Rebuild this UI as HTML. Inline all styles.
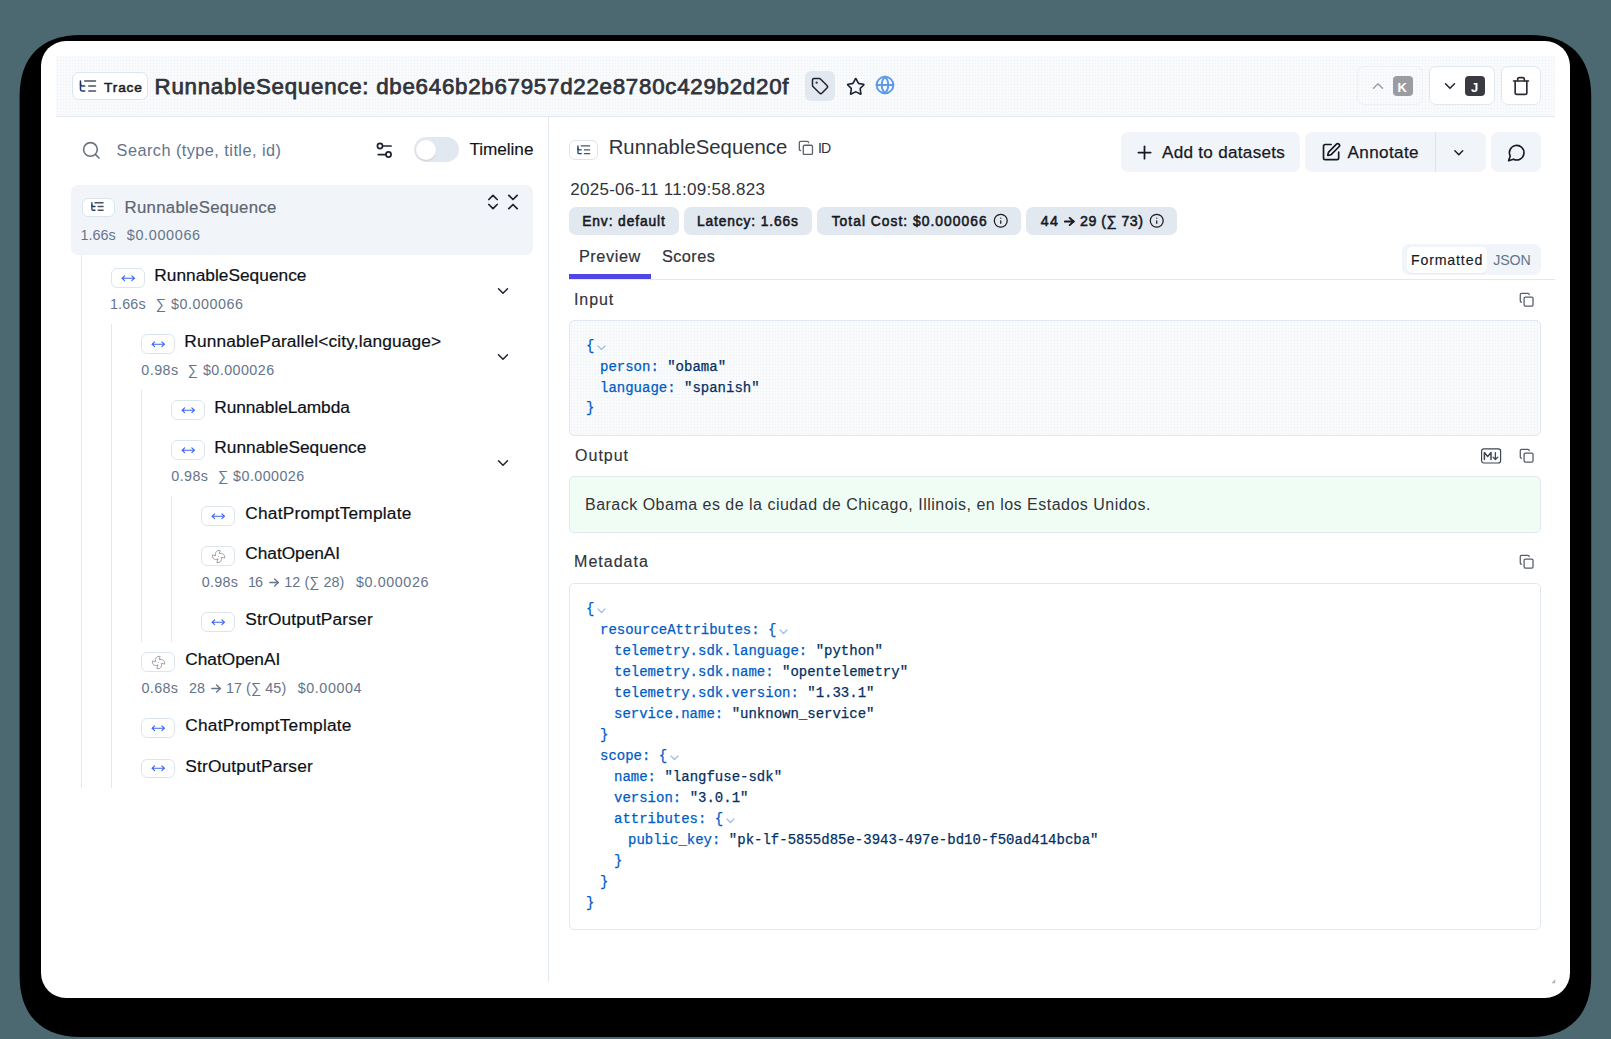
<!DOCTYPE html>
<html><head><meta charset="utf-8"><style>
html,body{margin:0;padding:0;}
body{width:1611px;height:1039px;position:relative;overflow:hidden;background:#4c6870;font-family:'Liberation Sans', sans-serif;}
</style></head><body>
<svg style="position:absolute;left:0;top:0" width="1611" height="1039"><path d="M80.6,35 L1530.2,35 C1569.24,35 1591.2,56.96 1591.2,96 L1591.2,976 C1591.2,1015.04 1569.24,1037 1530.2,1037 L80.6,1037 C41.56,1037 19.6,1015.04 19.6,976 L19.6,96 C19.6,56.96 41.56,35 80.6,35 Z" fill="#000"/></svg>
<div style="position:absolute;left:41px;top:41px;width:1529px;height:957px;background:#fff;border-radius:25px;"></div>
<div style="position:absolute;left:56px;top:56px;width:1499px;height:61px;background:#f8fafc;border-radius:0px;border-bottom:1px solid #e2e8f0;box-sizing:border-box;background-image:radial-gradient(circle at 1.5px 1.5px, #eceff4 0.6px, transparent 1px);background-size:3px 3px;"></div>
<div style="position:absolute;left:72px;top:72px;width:76px;height:28px;background:#fff;border-radius:0px;border:1.5px solid #dde5ef;box-sizing:border-box;border-radius:7px;"></div>
<svg style="position:absolute;left:78.0px;top:75.9px;" width="20" height="20" viewBox="0 0 24 24" fill="none" stroke="#1d3a6b" stroke-width="1.9" stroke-linecap="round" stroke-linejoin="round"><path d="M21 12h-8" stroke="#4a5261"/><path d="M21 6H8" stroke="#4a5261"/><path d="M21 18h-8" stroke="#4a5261"/><path d="M3 6v4c0 1.1.9 2 2 2h3"/><path d="M3 10v6c0 1.1.9 2 2 2h3"/></svg>
<div id="t1" style="position:absolute;left:104.00px;top:80.71px;font-family:'Liberation Sans', sans-serif;font-size:13.7px;line-height:1;font-weight:400;color:#1a1f2b;white-space:pre;letter-spacing:0.858px;-webkit-text-stroke:0.55px #1a1f2b;">Trace</div>
<div id="t2" style="position:absolute;left:154.60px;top:75.80px;font-family:'Liberation Sans', sans-serif;font-size:22.3px;line-height:1;font-weight:400;color:#30333b;white-space:pre;letter-spacing:0.740px;-webkit-text-stroke:0.75px #30333b;">RunnableSequence: dbe646b2b67957d22e8780c429b2d20f</div>
<div style="position:absolute;left:805px;top:71px;width:30px;height:30px;background:#e2e8f0;border-radius:6px;"></div>
<svg style="position:absolute;left:811.0px;top:77.0px;" width="18" height="18" viewBox="0 0 24 24" fill="none" stroke="#1f2330" stroke-width="2" stroke-linecap="round" stroke-linejoin="round"><path d="M12.586 2.586A2 2 0 0 0 11.172 2H4a2 2 0 0 0-2 2v7.172a2 2 0 0 0 .586 1.414l8.704 8.704a2.426 2.426 0 0 0 3.42 0l6.58-6.58a2.426 2.426 0 0 0 0-3.42z"/><circle cx="7.5" cy="7.5" r=".5" fill="currentColor"/></svg>
<svg style="position:absolute;left:845.65px;top:77.05px;" width="19.5" height="19.5" viewBox="0 0 24 24" fill="none" stroke="#1f2330" stroke-width="2" stroke-linecap="round" stroke-linejoin="round"><path d="M11.525 2.295a.53.53 0 0 1 .95 0l2.31 4.679a2.123 2.123 0 0 0 1.595 1.16l5.166.756a.53.53 0 0 1 .294.904l-3.736 3.638a2.123 2.123 0 0 0-.611 1.878l.882 5.14a.53.53 0 0 1-.771.56l-4.618-2.428a2.122 2.122 0 0 0-1.973 0L6.396 21.01a.53.53 0 0 1-.77-.56l.881-5.139a2.122 2.122 0 0 0-.611-1.879L2.16 9.795a.53.53 0 0 1 .294-.906l5.165-.755a2.122 2.122 0 0 0 1.597-1.16z"/></svg>
<svg style="position:absolute;left:875.1px;top:75.0px;" width="20" height="20" viewBox="0 0 24 24" fill="none" stroke="#5d9be8" stroke-width="2.3" stroke-linecap="round" stroke-linejoin="round"><circle cx="12" cy="12" r="10"/><path d="M12 2a14.5 14.5 0 0 0 0 20 14.5 14.5 0 0 0 0-20"/><path d="M2 12h20"/></svg>
<div style="position:absolute;left:1357px;top:66px;width:66px;height:39px;background:transparent;border:1px solid #edf1f5;box-sizing:border-box;border-radius:7px;"></div>
<svg style="position:absolute;left:1369.0px;top:77.0px;" width="18" height="18" viewBox="0 0 24 24" fill="none" stroke="#9aa0a8" stroke-width="2" stroke-linecap="round" stroke-linejoin="round"><path d="m18 15-6-6-6 6"/></svg>
<div style="position:absolute;left:1393px;top:76px;width:20px;height:20px;background:#9a9ca2;border-radius:4px;"></div>
<div id="t3" style="position:absolute;left:1397.50px;top:81.01px;font-family:'Liberation Sans', sans-serif;font-size:13px;line-height:1;font-weight:700;color:#fff;white-space:pre;">K</div>
<div style="position:absolute;left:1429px;top:66px;width:66px;height:39px;background:#fff;border:1px solid #e2e8f0;box-sizing:border-box;border-radius:7px;"></div>
<svg style="position:absolute;left:1441.0px;top:77.0px;" width="18" height="18" viewBox="0 0 24 24" fill="none" stroke="#1f2330" stroke-width="2" stroke-linecap="round" stroke-linejoin="round"><path d="m6 9 6 6 6-6"/></svg>
<div style="position:absolute;left:1465px;top:76px;width:20px;height:20px;background:#3a3b41;border-radius:4px;"></div>
<div id="t4" style="position:absolute;left:1471.00px;top:81.01px;font-family:'Liberation Sans', sans-serif;font-size:13px;line-height:1;font-weight:700;color:#fff;white-space:pre;">J</div>
<div style="position:absolute;left:1501px;top:66px;width:40px;height:39px;background:#fff;border:1px solid #e2e8f0;box-sizing:border-box;border-radius:7px;"></div>
<svg style="position:absolute;left:1511.1px;top:75.8px;" width="20" height="20" viewBox="0 0 24 24" fill="none" stroke="#2a2d35" stroke-width="2" stroke-linecap="round" stroke-linejoin="round"><path d="M3 6h18"/><path d="M19 6v14c0 1-1 2-2 2H7c-1 0-2-1-2-2V6"/><path d="M8 6V4c0-1 1-2 2-2h4c1 0 2 1 2 2v2"/></svg>
<div style="position:absolute;left:548px;top:117px;width:1px;height:865px;background:#e2e8f0;border-radius:0px;"></div>
<svg style="position:absolute;left:80.6px;top:139.7px;" width="20.6" height="20.6" viewBox="0 0 24 24" fill="none" stroke="#6b7280" stroke-width="1.9" stroke-linecap="round" stroke-linejoin="round"><circle cx="11" cy="11" r="8"/><path d="m21 21-4.3-4.3"/></svg>
<div id="t5" style="position:absolute;left:116.60px;top:142.00px;font-family:'Liberation Sans', sans-serif;font-size:16.3px;line-height:1;font-weight:400;color:#64748b;white-space:pre;letter-spacing:0.456px;">Search (type, title, id)</div>
<svg style="position:absolute;left:373.85px;top:139.55px;" width="20.5" height="20.5" viewBox="0 0 24 24" fill="none" stroke="#1f2330" stroke-width="2" stroke-linecap="round" stroke-linejoin="round"><path d="M20 7h-9"/><path d="M14 17H5"/><circle cx="17" cy="17" r="3"/><circle cx="7" cy="7" r="3"/></svg>
<div style="position:absolute;left:414px;top:137px;width:45px;height:25px;background:#e2e8f0;border-radius:13px;"></div>
<div style="position:absolute;left:416px;top:140.2px;width:20px;height:20px;background:#fff;border-radius:10px;box-shadow:0 1px 1.5px rgba(0,0,0,.12);"></div>
<div id="t6" style="position:absolute;left:469.40px;top:140.91px;font-family:'Liberation Sans', sans-serif;font-size:17.2px;line-height:1;font-weight:400;color:#111318;white-space:pre;letter-spacing:-0.036px;-webkit-text-stroke:0.15px #111318;">Timeline</div>
<div style="position:absolute;left:71px;top:185px;width:462px;height:70px;background:#f1f5f9;border-radius:7px;"></div>
<div style="position:absolute;left:81.5px;top:197.5px;width:33px;height:19px;background:#fff;border-radius:0px;border:1.5px solid #dce4ee;box-sizing:border-box;border-radius:6px;"></div>
<svg style="position:absolute;left:90.4px;top:199.4px;" width="15" height="15" viewBox="0 0 24 24" fill="none" stroke="#1d3a6b" stroke-width="2.1" stroke-linecap="round" stroke-linejoin="round"><path d="M21 12h-8" stroke="#4a5261"/><path d="M21 6H8" stroke="#4a5261"/><path d="M21 18h-8" stroke="#4a5261"/><path d="M3 6v4c0 1.1.9 2 2 2h3"/><path d="M3 10v6c0 1.1.9 2 2 2h3"/></svg>
<div id="t7" style="position:absolute;left:124.60px;top:199.90px;font-family:'Liberation Sans', sans-serif;font-size:16.8px;line-height:1;font-weight:400;color:#5e6570;white-space:pre;letter-spacing:0.287px;-webkit-text-stroke:0.2px #5e6570;">RunnableSequence</div>
<div id="t8" style="position:absolute;left:80.60px;top:228.01px;font-family:'Liberation Sans', sans-serif;font-size:14.4px;line-height:1;font-weight:400;color:#64748b;white-space:pre;letter-spacing:-0.052px;">1.66s</div>
<div id="t9" style="position:absolute;left:126.80px;top:228.01px;font-family:'Liberation Sans', sans-serif;font-size:14.4px;line-height:1;font-weight:400;color:#64748b;white-space:pre;letter-spacing:0.660px;">$0.000066</div>
<svg style="position:absolute;left:483.0px;top:192.0px;" width="20" height="20" viewBox="0 0 24 24" fill="none" stroke="#1f2330" stroke-width="2.1" stroke-linecap="round" stroke-linejoin="round"><path d="m7 15 5 5 5-5"/><path d="m7 9 5-5 5 5"/></svg>
<svg style="position:absolute;left:503.0px;top:192.0px;" width="20" height="20" viewBox="0 0 24 24" fill="none" stroke="#1f2330" stroke-width="2.1" stroke-linecap="round" stroke-linejoin="round"><path d="m7 20 5-5 5 5"/><path d="m7 4 5 5 5-5"/></svg>
<div style="position:absolute;left:81px;top:255px;width:1px;height:533px;background:#e2e8f0;border-radius:0px;"></div>
<div style="position:absolute;left:111px;top:324px;width:1px;height:464px;background:#e2e8f0;border-radius:0px;"></div>
<div style="position:absolute;left:141px;top:390px;width:1px;height:252px;background:#e2e8f0;border-radius:0px;"></div>
<div style="position:absolute;left:171px;top:496px;width:1px;height:146px;background:#e2e8f0;border-radius:0px;"></div>
<div style="position:absolute;left:111px;top:268px;width:33.5px;height:19.5px;background:#fff;border-radius:0px;border:1.5px solid #dce4ee;box-sizing:border-box;border-radius:6px;"></div>
<svg style="position:absolute;left:121.05px;top:270.55px;" width="14.5" height="14.5" viewBox="0 0 24 24" fill="none" stroke="#3b63f0" stroke-width="1.8" stroke-linecap="round" stroke-linejoin="round"><polyline points="18 8 22 12 18 16"/><polyline points="6 8 2 12 6 16"/><line x1="2" x2="22" y1="12" y2="12"/></svg>
<div id="t10" style="position:absolute;left:154.30px;top:267.00px;font-family:'Liberation Sans', sans-serif;font-size:17.3px;line-height:1;font-weight:400;color:#0d1117;white-space:pre;letter-spacing:0.020px;-webkit-text-stroke:0.2px #0d1117;">RunnableSequence</div>
<div id="t11" style="position:absolute;left:110.00px;top:297.00px;font-family:'Liberation Sans', sans-serif;font-size:14.3px;line-height:1;font-weight:400;color:#64748b;white-space:pre;letter-spacing:0.144px;">1.66s</div>
<div id="t12" style="position:absolute;left:155.80px;top:297.00px;font-family:'Liberation Sans', sans-serif;font-size:14.3px;line-height:1;font-weight:400;color:#64748b;white-space:pre;letter-spacing:0.550px;">∑ $0.000066</div>
<svg style="position:absolute;left:494.0px;top:281.5px;" width="18" height="18" viewBox="0 0 24 24" fill="none" stroke="#1f2330" stroke-width="2" stroke-linecap="round" stroke-linejoin="round"><path d="m6 9 6 6 6-6"/></svg>
<div style="position:absolute;left:141px;top:334px;width:33.5px;height:19.5px;background:#fff;border-radius:0px;border:1.5px solid #dce4ee;box-sizing:border-box;border-radius:6px;"></div>
<svg style="position:absolute;left:151.05px;top:336.55px;" width="14.5" height="14.5" viewBox="0 0 24 24" fill="none" stroke="#3b63f0" stroke-width="1.8" stroke-linecap="round" stroke-linejoin="round"><polyline points="18 8 22 12 18 16"/><polyline points="6 8 2 12 6 16"/><line x1="2" x2="22" y1="12" y2="12"/></svg>
<div id="t13" style="position:absolute;left:184.30px;top:333.00px;font-family:'Liberation Sans', sans-serif;font-size:17.3px;line-height:1;font-weight:400;color:#0d1117;white-space:pre;letter-spacing:0.151px;-webkit-text-stroke:0.2px #0d1117;">RunnableParallel&lt;city,language&gt;</div>
<div id="t14" style="position:absolute;left:141.30px;top:363.00px;font-family:'Liberation Sans', sans-serif;font-size:14.3px;line-height:1;font-weight:400;color:#64748b;white-space:pre;letter-spacing:0.469px;">0.98s</div>
<div id="t15" style="position:absolute;left:187.80px;top:363.00px;font-family:'Liberation Sans', sans-serif;font-size:14.3px;line-height:1;font-weight:400;color:#64748b;white-space:pre;letter-spacing:0.460px;">∑ $0.000026</div>
<svg style="position:absolute;left:494.0px;top:347.5px;" width="18" height="18" viewBox="0 0 24 24" fill="none" stroke="#1f2330" stroke-width="2" stroke-linecap="round" stroke-linejoin="round"><path d="m6 9 6 6 6-6"/></svg>
<div style="position:absolute;left:171px;top:400px;width:33.5px;height:19.5px;background:#fff;border-radius:0px;border:1.5px solid #dce4ee;box-sizing:border-box;border-radius:6px;"></div>
<svg style="position:absolute;left:181.05px;top:402.55px;" width="14.5" height="14.5" viewBox="0 0 24 24" fill="none" stroke="#3b63f0" stroke-width="1.8" stroke-linecap="round" stroke-linejoin="round"><polyline points="18 8 22 12 18 16"/><polyline points="6 8 2 12 6 16"/><line x1="2" x2="22" y1="12" y2="12"/></svg>
<div id="t16" style="position:absolute;left:214.30px;top:399.00px;font-family:'Liberation Sans', sans-serif;font-size:17.3px;line-height:1;font-weight:400;color:#0d1117;white-space:pre;letter-spacing:-0.071px;-webkit-text-stroke:0.2px #0d1117;">RunnableLambda</div>
<div style="position:absolute;left:171px;top:440.3px;width:33.5px;height:19.5px;background:#fff;border-radius:0px;border:1.5px solid #dce4ee;box-sizing:border-box;border-radius:6px;"></div>
<svg style="position:absolute;left:181.05px;top:442.85px;" width="14.5" height="14.5" viewBox="0 0 24 24" fill="none" stroke="#3b63f0" stroke-width="1.8" stroke-linecap="round" stroke-linejoin="round"><polyline points="18 8 22 12 18 16"/><polyline points="6 8 2 12 6 16"/><line x1="2" x2="22" y1="12" y2="12"/></svg>
<div id="t17" style="position:absolute;left:214.30px;top:439.30px;font-family:'Liberation Sans', sans-serif;font-size:17.3px;line-height:1;font-weight:400;color:#0d1117;white-space:pre;letter-spacing:0.013px;-webkit-text-stroke:0.2px #0d1117;">RunnableSequence</div>
<div id="t18" style="position:absolute;left:171.30px;top:469.31px;font-family:'Liberation Sans', sans-serif;font-size:14.3px;line-height:1;font-weight:400;color:#64748b;white-space:pre;letter-spacing:0.419px;">0.98s</div>
<div id="t19" style="position:absolute;left:218.10px;top:469.31px;font-family:'Liberation Sans', sans-serif;font-size:14.3px;line-height:1;font-weight:400;color:#64748b;white-space:pre;letter-spacing:0.430px;">∑ $0.000026</div>
<svg style="position:absolute;left:494.0px;top:453.8px;" width="18" height="18" viewBox="0 0 24 24" fill="none" stroke="#1f2330" stroke-width="2" stroke-linecap="round" stroke-linejoin="round"><path d="m6 9 6 6 6-6"/></svg>
<div style="position:absolute;left:201px;top:506.29999999999995px;width:33.5px;height:19.5px;background:#fff;border-radius:0px;border:1.5px solid #dce4ee;box-sizing:border-box;border-radius:6px;"></div>
<svg style="position:absolute;left:211.05px;top:508.85px;" width="14.5" height="14.5" viewBox="0 0 24 24" fill="none" stroke="#3b63f0" stroke-width="1.8" stroke-linecap="round" stroke-linejoin="round"><polyline points="18 8 22 12 18 16"/><polyline points="6 8 2 12 6 16"/><line x1="2" x2="22" y1="12" y2="12"/></svg>
<div id="t20" style="position:absolute;left:245.30px;top:505.30px;font-family:'Liberation Sans', sans-serif;font-size:17.3px;line-height:1;font-weight:400;color:#0d1117;white-space:pre;letter-spacing:0.217px;-webkit-text-stroke:0.2px #0d1117;">ChatPromptTemplate</div>
<div style="position:absolute;left:201px;top:546px;width:33.5px;height:19.5px;background:#fff;border-radius:0px;border:1.5px solid #dce4ee;box-sizing:border-box;border-radius:6px;"></div>
<svg style="position:absolute;left:210.8px;top:548.5px;" width="15" height="15" viewBox="0 0 24 24" fill="none" stroke="#a0a4ab" stroke-width="1.6" stroke-linecap="round" stroke-linejoin="round"><path d="M10.827 16.379a6.082 6.082 0 0 1-8.618-7.002l5.412 1.45a6.082 6.082 0 0 1 7.002-8.618l-1.45 5.412a6.082 6.082 0 0 1 8.618 7.002l-5.412-1.45a6.082 6.082 0 0 1-7.002 8.618l1.45-5.412Z"/><path d="M12 12v.01"/></svg>
<div id="t21" style="position:absolute;left:245.30px;top:545.01px;font-family:'Liberation Sans', sans-serif;font-size:17.3px;line-height:1;font-weight:400;color:#0d1117;white-space:pre;letter-spacing:-0.034px;-webkit-text-stroke:0.2px #0d1117;">ChatOpenAI</div>
<div id="t22" style="position:absolute;left:201.70px;top:575.00px;font-family:'Liberation Sans', sans-serif;font-size:14.3px;line-height:1;font-weight:400;color:#64748b;white-space:pre;letter-spacing:0.294px;">0.98s</div>
<div id="t23" style="position:absolute;left:248.10px;top:575.00px;font-family:'Liberation Sans', sans-serif;font-size:14.3px;line-height:1;font-weight:400;color:#64748b;white-space:pre;letter-spacing:-0.951px;">16</div>
<svg style="position:absolute;left:269.2px;top:577.5px;" width="10.5" height="9" viewBox="0 0 10.5 9" fill="none" stroke="#64748b" stroke-width="1.35" stroke-linecap="round" stroke-linejoin="round"><path d="M0.8 4.5h8.5"/><path d="M5.6 0.9l3.7 3.6-3.7 3.6"/></svg>
<div id="t24" style="position:absolute;left:284.30px;top:575.00px;font-family:'Liberation Sans', sans-serif;font-size:14.3px;line-height:1;font-weight:400;color:#64748b;white-space:pre;letter-spacing:0.075px;">12 (∑ 28)</div>
<div id="t25" style="position:absolute;left:355.90px;top:575.00px;font-family:'Liberation Sans', sans-serif;font-size:14.3px;line-height:1;font-weight:400;color:#64748b;white-space:pre;letter-spacing:0.621px;">$0.000026</div>
<div style="position:absolute;left:201px;top:612.3px;width:33.5px;height:19.5px;background:#fff;border-radius:0px;border:1.5px solid #dce4ee;box-sizing:border-box;border-radius:6px;"></div>
<svg style="position:absolute;left:211.05px;top:614.85px;" width="14.5" height="14.5" viewBox="0 0 24 24" fill="none" stroke="#3b63f0" stroke-width="1.8" stroke-linecap="round" stroke-linejoin="round"><polyline points="18 8 22 12 18 16"/><polyline points="6 8 2 12 6 16"/><line x1="2" x2="22" y1="12" y2="12"/></svg>
<div id="t26" style="position:absolute;left:245.30px;top:611.30px;font-family:'Liberation Sans', sans-serif;font-size:17.3px;line-height:1;font-weight:400;color:#0d1117;white-space:pre;letter-spacing:0.178px;-webkit-text-stroke:0.2px #0d1117;">StrOutputParser</div>
<div style="position:absolute;left:141px;top:652.2px;width:33.5px;height:19.5px;background:#fff;border-radius:0px;border:1.5px solid #dce4ee;box-sizing:border-box;border-radius:6px;"></div>
<svg style="position:absolute;left:150.8px;top:654.7px;" width="15" height="15" viewBox="0 0 24 24" fill="none" stroke="#a0a4ab" stroke-width="1.6" stroke-linecap="round" stroke-linejoin="round"><path d="M10.827 16.379a6.082 6.082 0 0 1-8.618-7.002l5.412 1.45a6.082 6.082 0 0 1 7.002-8.618l-1.45 5.412a6.082 6.082 0 0 1 8.618 7.002l-5.412-1.45a6.082 6.082 0 0 1-7.002 8.618l1.45-5.412Z"/><path d="M12 12v.01"/></svg>
<div id="t27" style="position:absolute;left:185.30px;top:651.21px;font-family:'Liberation Sans', sans-serif;font-size:17.3px;line-height:1;font-weight:400;color:#0d1117;white-space:pre;letter-spacing:-0.023px;-webkit-text-stroke:0.2px #0d1117;">ChatOpenAI</div>
<div id="t28" style="position:absolute;left:141.60px;top:681.21px;font-family:'Liberation Sans', sans-serif;font-size:14.3px;line-height:1;font-weight:400;color:#64748b;white-space:pre;letter-spacing:0.319px;">0.68s</div>
<div id="t29" style="position:absolute;left:189.10px;top:681.21px;font-family:'Liberation Sans', sans-serif;font-size:14.3px;line-height:1;font-weight:400;color:#64748b;white-space:pre;letter-spacing:0.049px;">28</div>
<svg style="position:absolute;left:210.9px;top:683.7px;" width="10.5" height="9" viewBox="0 0 10.5 9" fill="none" stroke="#64748b" stroke-width="1.35" stroke-linecap="round" stroke-linejoin="round"><path d="M0.8 4.5h8.5"/><path d="M5.6 0.9l3.7 3.6-3.7 3.6"/></svg>
<div id="t30" style="position:absolute;left:225.90px;top:681.21px;font-family:'Liberation Sans', sans-serif;font-size:14.3px;line-height:1;font-weight:400;color:#64748b;white-space:pre;letter-spacing:0.100px;">17 (∑ 45)</div>
<div id="t31" style="position:absolute;left:297.70px;top:681.21px;font-family:'Liberation Sans', sans-serif;font-size:14.3px;line-height:1;font-weight:400;color:#64748b;white-space:pre;letter-spacing:0.603px;">$0.00004</div>
<div style="position:absolute;left:141px;top:718.3px;width:33.5px;height:19.5px;background:#fff;border-radius:0px;border:1.5px solid #dce4ee;box-sizing:border-box;border-radius:6px;"></div>
<svg style="position:absolute;left:151.05px;top:720.85px;" width="14.5" height="14.5" viewBox="0 0 24 24" fill="none" stroke="#3b63f0" stroke-width="1.8" stroke-linecap="round" stroke-linejoin="round"><polyline points="18 8 22 12 18 16"/><polyline points="6 8 2 12 6 16"/><line x1="2" x2="22" y1="12" y2="12"/></svg>
<div id="t32" style="position:absolute;left:185.30px;top:717.30px;font-family:'Liberation Sans', sans-serif;font-size:17.3px;line-height:1;font-weight:400;color:#0d1117;white-space:pre;letter-spacing:0.223px;-webkit-text-stroke:0.2px #0d1117;">ChatPromptTemplate</div>
<div style="position:absolute;left:141px;top:758.5px;width:33.5px;height:19.5px;background:#fff;border-radius:0px;border:1.5px solid #dce4ee;box-sizing:border-box;border-radius:6px;"></div>
<svg style="position:absolute;left:151.05px;top:761.05px;" width="14.5" height="14.5" viewBox="0 0 24 24" fill="none" stroke="#3b63f0" stroke-width="1.8" stroke-linecap="round" stroke-linejoin="round"><polyline points="18 8 22 12 18 16"/><polyline points="6 8 2 12 6 16"/><line x1="2" x2="22" y1="12" y2="12"/></svg>
<div id="t33" style="position:absolute;left:185.30px;top:757.51px;font-family:'Liberation Sans', sans-serif;font-size:17.3px;line-height:1;font-weight:400;color:#0d1117;white-space:pre;letter-spacing:0.185px;-webkit-text-stroke:0.2px #0d1117;">StrOutputParser</div>
<div style="position:absolute;left:569.3px;top:140.3px;width:28.4px;height:19.6px;background:#fff;border-radius:0px;border:1.5px solid #dce4ee;box-sizing:border-box;border-radius:6px;"></div>
<svg style="position:absolute;left:575.7px;top:141.7px;" width="15.6" height="15.6" viewBox="0 0 24 24" fill="none" stroke="#1d3a6b" stroke-width="2" stroke-linecap="round" stroke-linejoin="round"><path d="M21 12h-8" stroke="#4a5261"/><path d="M21 6H8" stroke="#4a5261"/><path d="M21 18h-8" stroke="#4a5261"/><path d="M3 6v4c0 1.1.9 2 2 2h3"/><path d="M3 10v6c0 1.1.9 2 2 2h3"/></svg>
<div id="t34" style="position:absolute;left:608.70px;top:136.91px;font-family:'Liberation Sans', sans-serif;font-size:20.3px;line-height:1;font-weight:400;color:#30333b;white-space:pre;letter-spacing:0.027px;">RunnableSequence</div>
<svg style="position:absolute;left:798.0px;top:139.6px;" width="15.8" height="15.8" viewBox="0 0 24 24" fill="none" stroke="#5b6270" stroke-width="2" stroke-linecap="round" stroke-linejoin="round"><rect width="14" height="14" x="8" y="8" rx="2" ry="2"/><path d="M4 16c-1.1 0-2-.9-2-2V4c0-1.1.9-2 2-2h10c1.1 0 2 .9 2 2"/></svg>
<div id="t35" style="position:absolute;left:818.00px;top:140.90px;font-family:'Liberation Sans', sans-serif;font-size:14.1px;line-height:1;font-weight:400;color:#30333b;white-space:pre;letter-spacing:-0.916px;">ID</div>
<div id="t36" style="position:absolute;left:570.20px;top:181.00px;font-family:'Liberation Sans', sans-serif;font-size:17px;line-height:1;font-weight:400;color:#30333b;white-space:pre;letter-spacing:0.283px;">2025-06-11 11:09:58.823</div>
<div style="position:absolute;left:569px;top:207px;width:110px;height:28px;background:#e2e8f0;border-radius:7px;"></div>
<div id="t37" style="position:absolute;left:582.20px;top:214.81px;font-family:'Liberation Sans', sans-serif;font-size:13.8px;line-height:1;font-weight:400;color:#16191f;white-space:pre;letter-spacing:0.888px;-webkit-text-stroke:0.55px #16191f;">Env: default</div>
<div style="position:absolute;left:684px;top:207px;width:128px;height:28px;background:#e2e8f0;border-radius:7px;"></div>
<div id="t38" style="position:absolute;left:697.00px;top:214.81px;font-family:'Liberation Sans', sans-serif;font-size:13.8px;line-height:1;font-weight:400;color:#16191f;white-space:pre;letter-spacing:0.858px;-webkit-text-stroke:0.55px #16191f;">Latency: 1.66s</div>
<div style="position:absolute;left:817px;top:207px;width:204px;height:28px;background:#e2e8f0;border-radius:7px;"></div>
<div id="t39" style="position:absolute;left:831.70px;top:214.81px;font-family:'Liberation Sans', sans-serif;font-size:13.8px;line-height:1;font-weight:400;color:#16191f;white-space:pre;letter-spacing:1.032px;-webkit-text-stroke:0.55px #16191f;">Total Cost: $0.000066</div>
<svg style="position:absolute;left:993.05px;top:213.45px;" width="15.5" height="15.5" viewBox="0 0 24 24" fill="none" stroke="#16191f" stroke-width="1.9" stroke-linecap="round" stroke-linejoin="round"><circle cx="12" cy="12" r="10"/><path d="M12 16v-4"/><path d="M12 8h.01"/></svg>
<div style="position:absolute;left:1026px;top:207px;width:151px;height:28px;background:#e2e8f0;border-radius:7px;"></div>
<div id="t40" style="position:absolute;left:1040.70px;top:213.82px;font-family:'Liberation Sans', sans-serif;font-size:14.2px;line-height:1;font-weight:400;color:#16191f;white-space:pre;letter-spacing:1.310px;-webkit-text-stroke:0.55px #16191f;">44</div>
<svg style="position:absolute;left:1063.8px;top:216.6px;" width="11" height="9" viewBox="0 0 11 9" fill="none" stroke="#16191f" stroke-width="1.9" stroke-linecap="round" stroke-linejoin="round"><path d="M0.9 4.5h8.8"/><path d="M5.7 0.9l3.9 3.6-3.9 3.6"/></svg>
<div id="t41" style="position:absolute;left:1080.10px;top:213.81px;font-family:'Liberation Sans', sans-serif;font-size:14.2px;line-height:1;font-weight:400;color:#16191f;white-space:pre;letter-spacing:0.477px;-webkit-text-stroke:0.55px #16191f;">29 (∑ 73)</div>
<svg style="position:absolute;left:1148.85px;top:212.65px;" width="15.5" height="15.5" viewBox="0 0 24 24" fill="none" stroke="#16191f" stroke-width="1.9" stroke-linecap="round" stroke-linejoin="round"><circle cx="12" cy="12" r="10"/><path d="M12 16v-4"/><path d="M12 8h.01"/></svg>
<div style="position:absolute;left:1121px;top:132px;width:179px;height:40px;background:#f1f5f9;border-radius:7px;"></div>
<svg style="position:absolute;left:1133.5px;top:141.5px;" width="21" height="21" viewBox="0 0 24 24" fill="none" stroke="#16191f" stroke-width="2" stroke-linecap="round" stroke-linejoin="round"><path d="M5 12h14"/><path d="M12 5v14"/></svg>
<div id="t42" style="position:absolute;left:1162.00px;top:143.90px;font-family:'Liberation Sans', sans-serif;font-size:17.1px;line-height:1;font-weight:400;color:#16191f;white-space:pre;letter-spacing:0.290px;-webkit-text-stroke:0.25px #16191f;">Add to datasets</div>
<div style="position:absolute;left:1305px;top:132px;width:180.7px;height:40px;background:#f1f5f9;border-radius:7px;"></div>
<div style="position:absolute;left:1434.5px;top:132px;width:1px;height:40px;background:#dde3ea;border-radius:0px;"></div>
<svg style="position:absolute;left:1320.7px;top:142.4px;" width="20.2" height="20.2" viewBox="0 0 24 24" fill="none" stroke="#16191f" stroke-width="2" stroke-linecap="round" stroke-linejoin="round"><path d="M12 3H5a2 2 0 0 0-2 2v14a2 2 0 0 0 2 2h14a2 2 0 0 0 2-2v-7"/><path d="M18.375 2.625a1 1 0 0 1 3 3l-9.013 9.014a2 2 0 0 1-.853.505l-2.873.84a.5.5 0 0 1-.62-.62l.84-2.873a2 2 0 0 1 .506-.852z"/></svg>
<div id="t43" style="position:absolute;left:1347.60px;top:143.90px;font-family:'Liberation Sans', sans-serif;font-size:17.1px;line-height:1;font-weight:400;color:#16191f;white-space:pre;letter-spacing:0.353px;-webkit-text-stroke:0.25px #16191f;">Annotate</div>
<svg style="position:absolute;left:1450.7px;top:144.6px;" width="15.6" height="15.6" viewBox="0 0 24 24" fill="none" stroke="#16191f" stroke-width="2.2" stroke-linecap="round" stroke-linejoin="round"><path d="m6 9 6 6 6-6"/></svg>
<div style="position:absolute;left:1491px;top:132px;width:50px;height:40px;background:#f1f5f9;border-radius:7px;"></div>
<svg style="position:absolute;left:1506.7px;top:142.6px;" width="19.4" height="19.4" viewBox="0 0 24 24" fill="none" stroke="#16191f" stroke-width="2" stroke-linecap="round" stroke-linejoin="round"><path d="M7.9 20A9 9 0 1 0 4 16.1L2 22Z"/></svg>
<div id="t44" style="position:absolute;left:578.90px;top:247.81px;font-family:'Liberation Sans', sans-serif;font-size:16.3px;line-height:1;font-weight:400;color:#30333b;white-space:pre;letter-spacing:0.592px;-webkit-text-stroke:0.2px #30333b;">Preview</div>
<div id="t45" style="position:absolute;left:661.90px;top:247.81px;font-family:'Liberation Sans', sans-serif;font-size:16.3px;line-height:1;font-weight:400;color:#30333b;white-space:pre;letter-spacing:0.454px;-webkit-text-stroke:0.2px #30333b;">Scores</div>
<div style="position:absolute;left:569px;top:279px;width:986px;height:1px;background:#e2e8f0;border-radius:0px;"></div>
<div style="position:absolute;left:569px;top:274px;width:82px;height:5px;background:#4f46e5;border-radius:0px;"></div>
<div style="position:absolute;left:1402px;top:244px;width:139px;height:31px;background:#f1f5f9;border-radius:7px;"></div>
<div style="position:absolute;left:1407px;top:247px;width:80px;height:26px;background:#fff;border-radius:5px;box-shadow:0 1px 1px rgba(0,0,0,.05);"></div>
<div id="t46" style="position:absolute;left:1410.90px;top:252.81px;font-family:'Liberation Sans', sans-serif;font-size:14.2px;line-height:1;font-weight:400;color:#16191f;white-space:pre;letter-spacing:0.842px;-webkit-text-stroke:0.15px #16191f;">Formatted</div>
<div id="t47" style="position:absolute;left:1493.20px;top:252.81px;font-family:'Liberation Sans', sans-serif;font-size:14.2px;line-height:1;font-weight:400;color:#64748b;white-space:pre;letter-spacing:-0.097px;">JSON</div>
<div id="t48" style="position:absolute;left:574.00px;top:292.11px;font-family:'Liberation Sans', sans-serif;font-size:16px;line-height:1;font-weight:400;color:#30333b;white-space:pre;letter-spacing:0.915px;-webkit-text-stroke:0.15px #30333b;">Input</div>
<svg style="position:absolute;left:1518.65px;top:291.65px;" width="15.3" height="15.3" viewBox="0 0 24 24" fill="none" stroke="#565d6b" stroke-width="2" stroke-linecap="round" stroke-linejoin="round"><rect width="14" height="14" x="8" y="8" rx="2" ry="2"/><path d="M4 16c-1.1 0-2-.9-2-2V4c0-1.1.9-2 2-2h10c1.1 0 2 .9 2 2"/></svg>
<div style="position:absolute;left:569px;top:320px;width:972px;height:116px;background:#f8fafc;border:1px solid #e2e8f0;box-sizing:border-box;border-radius:5px;background-image:radial-gradient(circle at 1.5px 1.5px, #eceff4 0.6px, transparent 1px);background-size:3px 3px;"></div>
<div style="position:absolute;left:586px;top:339.16px;font-family:'Liberation Mono', monospace;font-size:14px;line-height:1;white-space:pre;-webkit-text-stroke:0.25px currentColor;"><span style="color:#005cc5;-webkit-text-stroke:0.25px #005cc5">{</span></div>
<svg style="position:absolute;left:596.8px;top:345px;" width="9" height="6" viewBox="0 0 9 6" fill="none" stroke="#9dbce8" stroke-width="1.2" stroke-linecap="round" stroke-linejoin="round"><path d="M1 1l3.5 3.5L8 1"/></svg>
<div style="position:absolute;left:600px;top:360.46px;font-family:'Liberation Mono', monospace;font-size:14px;line-height:1;white-space:pre;-webkit-text-stroke:0.25px currentColor;"><span style="color:#005cc5;-webkit-text-stroke:0.25px #005cc5">person: </span><span style="color:#032f62;-webkit-text-stroke:0.25px #032f62">"obama"</span></div>
<div style="position:absolute;left:600px;top:380.96px;font-family:'Liberation Mono', monospace;font-size:14px;line-height:1;white-space:pre;-webkit-text-stroke:0.25px currentColor;"><span style="color:#005cc5;-webkit-text-stroke:0.25px #005cc5">language: </span><span style="color:#032f62;-webkit-text-stroke:0.25px #032f62">"spanish"</span></div>
<div style="position:absolute;left:586px;top:401.46px;font-family:'Liberation Mono', monospace;font-size:14px;line-height:1;white-space:pre;-webkit-text-stroke:0.25px currentColor;"><span style="color:#005cc5;-webkit-text-stroke:0.25px #005cc5">}</span></div>
<div id="t53" style="position:absolute;left:575.10px;top:447.91px;font-family:'Liberation Sans', sans-serif;font-size:16px;line-height:1;font-weight:400;color:#30333b;white-space:pre;letter-spacing:0.983px;-webkit-text-stroke:0.15px #30333b;">Output</div>
<svg style="position:absolute;left:1480px;top:447px;" width="22" height="18" viewBox="0 0 22 18" fill="none" stroke="#3f4552" stroke-width="1.2" stroke-linecap="round" stroke-linejoin="round"><rect x="1.6" y="1.8" width="19" height="14.2" rx="2.2"/><path d="M4.4 12.6V5.6l3.3 3.9 3.3-3.9v7" stroke-width="1.5"/><path d="M15.4 5.6v6.8M13 10.1l2.4 2.4 2.4-2.4" stroke-width="1.3"/></svg>
<svg style="position:absolute;left:1518.65px;top:447.55px;" width="15.3" height="15.3" viewBox="0 0 24 24" fill="none" stroke="#565d6b" stroke-width="2" stroke-linecap="round" stroke-linejoin="round"><rect width="14" height="14" x="8" y="8" rx="2" ry="2"/><path d="M4 16c-1.1 0-2-.9-2-2V4c0-1.1.9-2 2-2h10c1.1 0 2 .9 2 2"/></svg>
<div style="position:absolute;left:569px;top:476px;width:972px;height:57px;background:#f0fdf4;border:1px solid #e0e8ee;box-sizing:border-box;border-radius:5px;"></div>
<div id="t54" style="position:absolute;left:585.00px;top:496.82px;font-family:'Liberation Sans', sans-serif;font-size:16px;line-height:1;font-weight:400;color:#30333b;white-space:pre;letter-spacing:0.491px;">Barack Obama es de la ciudad de Chicago, Illinois, en los Estados Unidos.</div>
<div id="t55" style="position:absolute;left:574.10px;top:554.41px;font-family:'Liberation Sans', sans-serif;font-size:16px;line-height:1;font-weight:400;color:#30333b;white-space:pre;letter-spacing:0.998px;-webkit-text-stroke:0.15px #30333b;">Metadata</div>
<svg style="position:absolute;left:1518.65px;top:554.35px;" width="15.3" height="15.3" viewBox="0 0 24 24" fill="none" stroke="#565d6b" stroke-width="2" stroke-linecap="round" stroke-linejoin="round"><rect width="14" height="14" x="8" y="8" rx="2" ry="2"/><path d="M4 16c-1.1 0-2-.9-2-2V4c0-1.1.9-2 2-2h10c1.1 0 2 .9 2 2"/></svg>
<div style="position:absolute;left:569px;top:583px;width:972px;height:346.5px;background:#fff;border:1px solid #e2e8f0;box-sizing:border-box;border-radius:5px;"></div>
<div style="position:absolute;left:586px;top:602.16px;font-family:'Liberation Mono', monospace;font-size:14px;line-height:1;white-space:pre;-webkit-text-stroke:0.25px currentColor;"><span style="color:#005cc5;-webkit-text-stroke:0.25px #005cc5">{</span></div>
<svg style="position:absolute;left:596.9px;top:608px;" width="9" height="6" viewBox="0 0 9 6" fill="none" stroke="#9dbce8" stroke-width="1.2" stroke-linecap="round" stroke-linejoin="round"><path d="M1 1l3.5 3.5L8 1"/></svg>
<div style="position:absolute;left:600px;top:623.16px;font-family:'Liberation Mono', monospace;font-size:14px;line-height:1;white-space:pre;-webkit-text-stroke:0.25px currentColor;"><span style="color:#005cc5;-webkit-text-stroke:0.25px #005cc5">resourceAttributes: {</span></div>
<svg style="position:absolute;left:778.9px;top:629px;" width="9" height="6" viewBox="0 0 9 6" fill="none" stroke="#9dbce8" stroke-width="1.2" stroke-linecap="round" stroke-linejoin="round"><path d="M1 1l3.5 3.5L8 1"/></svg>
<div style="position:absolute;left:614px;top:644.16px;font-family:'Liberation Mono', monospace;font-size:14px;line-height:1;white-space:pre;-webkit-text-stroke:0.25px currentColor;"><span style="color:#005cc5;-webkit-text-stroke:0.25px #005cc5">telemetry.sdk.language: </span><span style="color:#032f62;-webkit-text-stroke:0.25px #032f62">"python"</span></div>
<div style="position:absolute;left:614px;top:665.16px;font-family:'Liberation Mono', monospace;font-size:14px;line-height:1;white-space:pre;-webkit-text-stroke:0.25px currentColor;"><span style="color:#005cc5;-webkit-text-stroke:0.25px #005cc5">telemetry.sdk.name: </span><span style="color:#032f62;-webkit-text-stroke:0.25px #032f62">"opentelemetry"</span></div>
<div style="position:absolute;left:614px;top:686.16px;font-family:'Liberation Mono', monospace;font-size:14px;line-height:1;white-space:pre;-webkit-text-stroke:0.25px currentColor;"><span style="color:#005cc5;-webkit-text-stroke:0.25px #005cc5">telemetry.sdk.version: </span><span style="color:#032f62;-webkit-text-stroke:0.25px #032f62">"1.33.1"</span></div>
<div style="position:absolute;left:614px;top:707.16px;font-family:'Liberation Mono', monospace;font-size:14px;line-height:1;white-space:pre;-webkit-text-stroke:0.25px currentColor;"><span style="color:#005cc5;-webkit-text-stroke:0.25px #005cc5">service.name: </span><span style="color:#032f62;-webkit-text-stroke:0.25px #032f62">"unknown_service"</span></div>
<div style="position:absolute;left:600px;top:728.16px;font-family:'Liberation Mono', monospace;font-size:14px;line-height:1;white-space:pre;-webkit-text-stroke:0.25px currentColor;"><span style="color:#005cc5;-webkit-text-stroke:0.25px #005cc5">}</span></div>
<div style="position:absolute;left:600px;top:749.16px;font-family:'Liberation Mono', monospace;font-size:14px;line-height:1;white-space:pre;-webkit-text-stroke:0.25px currentColor;"><span style="color:#005cc5;-webkit-text-stroke:0.25px #005cc5">scope: {</span></div>
<svg style="position:absolute;left:669.7px;top:755px;" width="9" height="6" viewBox="0 0 9 6" fill="none" stroke="#9dbce8" stroke-width="1.2" stroke-linecap="round" stroke-linejoin="round"><path d="M1 1l3.5 3.5L8 1"/></svg>
<div style="position:absolute;left:614px;top:770.16px;font-family:'Liberation Mono', monospace;font-size:14px;line-height:1;white-space:pre;-webkit-text-stroke:0.25px currentColor;"><span style="color:#005cc5;-webkit-text-stroke:0.25px #005cc5">name: </span><span style="color:#032f62;-webkit-text-stroke:0.25px #032f62">"langfuse-sdk"</span></div>
<div style="position:absolute;left:614px;top:791.16px;font-family:'Liberation Mono', monospace;font-size:14px;line-height:1;white-space:pre;-webkit-text-stroke:0.25px currentColor;"><span style="color:#005cc5;-webkit-text-stroke:0.25px #005cc5">version: </span><span style="color:#032f62;-webkit-text-stroke:0.25px #032f62">"3.0.1"</span></div>
<div style="position:absolute;left:614px;top:812.16px;font-family:'Liberation Mono', monospace;font-size:14px;line-height:1;white-space:pre;-webkit-text-stroke:0.25px currentColor;"><span style="color:#005cc5;-webkit-text-stroke:0.25px #005cc5">attributes: {</span></div>
<svg style="position:absolute;left:725.7px;top:818px;" width="9" height="6" viewBox="0 0 9 6" fill="none" stroke="#9dbce8" stroke-width="1.2" stroke-linecap="round" stroke-linejoin="round"><path d="M1 1l3.5 3.5L8 1"/></svg>
<div style="position:absolute;left:628px;top:833.16px;font-family:'Liberation Mono', monospace;font-size:14px;line-height:1;white-space:pre;-webkit-text-stroke:0.25px currentColor;"><span style="color:#005cc5;-webkit-text-stroke:0.25px #005cc5">public_key: </span><span style="color:#032f62;-webkit-text-stroke:0.25px #032f62">"pk-lf-5855d85e-3943-497e-bd10-f50ad414bcba"</span></div>
<div style="position:absolute;left:614px;top:854.16px;font-family:'Liberation Mono', monospace;font-size:14px;line-height:1;white-space:pre;-webkit-text-stroke:0.25px currentColor;"><span style="color:#005cc5;-webkit-text-stroke:0.25px #005cc5">}</span></div>
<div style="position:absolute;left:600px;top:875.16px;font-family:'Liberation Mono', monospace;font-size:14px;line-height:1;white-space:pre;-webkit-text-stroke:0.25px currentColor;"><span style="color:#005cc5;-webkit-text-stroke:0.25px #005cc5">}</span></div>
<div style="position:absolute;left:586px;top:896.16px;font-family:'Liberation Mono', monospace;font-size:14px;line-height:1;white-space:pre;-webkit-text-stroke:0.25px currentColor;"><span style="color:#005cc5;-webkit-text-stroke:0.25px #005cc5">}</span></div>
<svg style="position:absolute;left:1550px;top:978px" width="8" height="8" viewBox="0 0 8 8"><path d="M5.2 1.2V5.2H1.6Z" fill="#a9b0bc"/></svg>
</body></html>
